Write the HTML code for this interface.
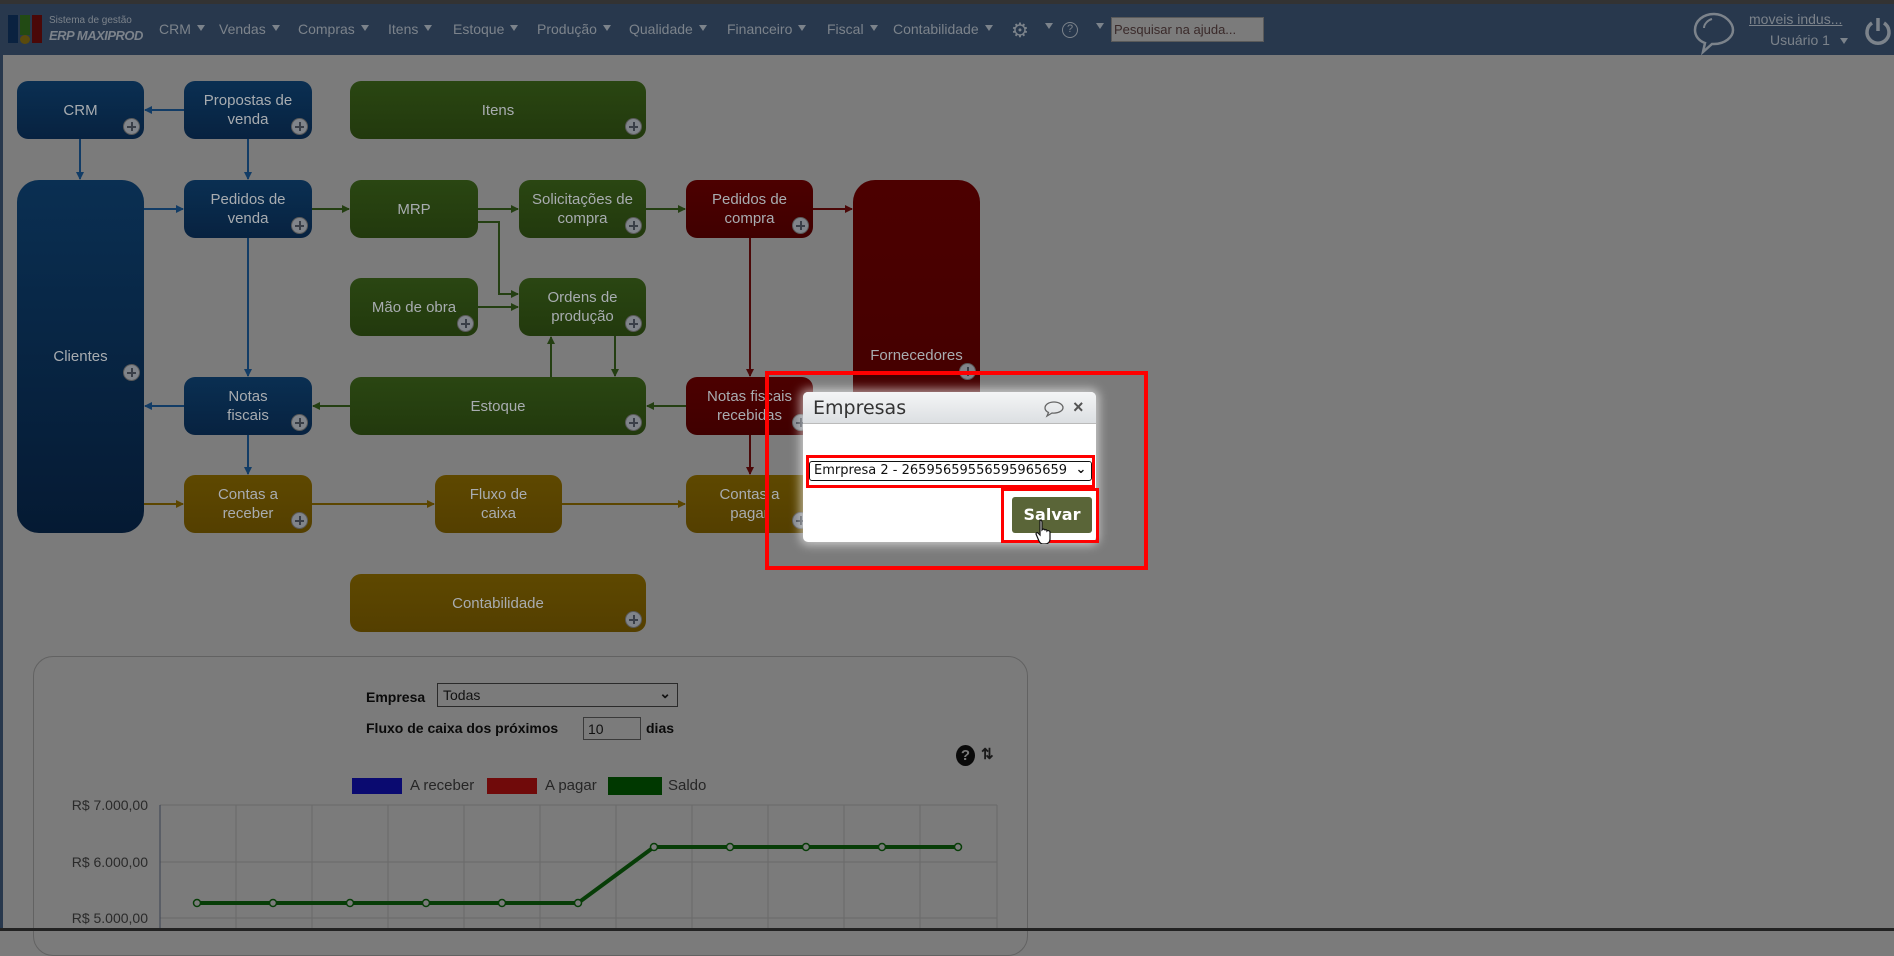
<!DOCTYPE html>
<html><head><meta charset="utf-8">
<style>
*{margin:0;padding:0;box-sizing:border-box}
body{width:1894px;height:931px;overflow:hidden;background:#7b7b7b;font-family:"Liberation Sans",sans-serif;position:relative}
.top{position:absolute;left:0;top:0;width:1894px;height:4px;background:#333}
.nav{position:absolute;left:0;top:4px;width:1894px;height:51px;background:#28384d}
.nav .m{position:absolute;top:17px;font-size:14px;color:#7c838b}
.nav .m:after{content:"";display:inline-block;margin-left:6px;border-left:4px solid transparent;border-right:4px solid transparent;border-top:6px solid #7c838b;vertical-align:3px}
.lb{position:absolute;left:0;top:55px;width:3px;height:876px;background:#28384d}
.b{position:absolute;border-radius:11px;color:#a8acb0;font-size:15px;text-align:center;display:flex;align-items:center;justify-content:center;line-height:19px}
.bl{background:linear-gradient(#0a2f52,#072240)}
.gr{background:linear-gradient(#2a4612,#22390d)}
.rd{background:linear-gradient(#4c0000,#400000)}
.yl{background:linear-gradient(#5e4800,#543f00)}
.p{position:absolute;right:4px;bottom:4px;width:17px;height:17px;border-radius:50%;background:#80848a;border:1px solid #5a5a5a}
.p:before{content:"";position:absolute;left:3px;top:7px;width:9px;height:2px;background:#3a3f48}
.p:after{content:"";position:absolute;left:7px;top:3px;width:2px;height:9px;background:#3a3f48}
.panel{position:absolute;left:33px;top:656px;width:995px;height:300px;border:1px solid #626262;border-radius:20px}
.t{position:absolute;font-size:14px;color:#0a0a0a}
</style></head><body>
<div class="top"></div>
<div class="nav">
 <div style="position:absolute;left:8px;top:11px;width:10px;height:28px;background:#0a2240"></div>
 <div style="position:absolute;left:20px;top:11px;width:10px;height:20px;background:#224a14"></div>
 <div style="position:absolute;left:20px;top:31px;width:10px;height:9px;border-radius:50%;background:#5a4a0c"></div>
 <div style="position:absolute;left:32px;top:11px;width:10px;height:28px;background:#4a0808"></div>
 <div style="position:absolute;left:49px;top:11px;font-size:10px;color:#7c838b">Sistema de gestão</div>
 <div style="position:absolute;left:49px;top:24px;font-size:13px;font-style:italic;font-weight:bold;color:#7c838b;letter-spacing:-0.5px">ERP MAXIPROD</div>
 <div class="m" style="left:159px">CRM</div>
 <div class="m" style="left:219px">Vendas</div>
 <div class="m" style="left:298px">Compras</div>
 <div class="m" style="left:388px">Itens</div>
 <div class="m" style="left:453px">Estoque</div>
 <div class="m" style="left:537px">Produção</div>
 <div class="m" style="left:629px">Qualidade</div>
 <div class="m" style="left:727px">Financeiro</div>
 <div class="m" style="left:827px">Fiscal</div>
 <div class="m" style="left:893px">Contabilidade</div>
 <div style="position:absolute;left:1011px;top:14px;font-size:20px;color:#7c838b">⚙</div>
 <div style="position:absolute;left:1045px;top:19px;border-left:4px solid transparent;border-right:4px solid transparent;border-top:6px solid #7c838b"></div>
 <div style="position:absolute;left:1062px;top:18px;width:16px;height:16px;border:1.5px solid #7c838b;border-radius:50%;font-size:11px;color:#7c838b;text-align:center;line-height:13px">?</div>
 <div style="position:absolute;left:1096px;top:19px;border-left:4px solid transparent;border-right:4px solid transparent;border-top:6px solid #7c838b"></div>
 <div style="position:absolute;left:1111px;top:13px;width:153px;height:25px;background:#7b7b7b;border:1px solid #5a5a5a;font-size:13px;color:#3a2a2a;padding:4px 2px">Pesquisar na ajuda...</div>
 <svg style="position:absolute;left:1690px;top:6px" width="48" height="46" viewBox="0 0 48 46"><path d="M24 4C13 4 5 11 5 20c0 6 4 11 10 13l-2 9 9-8c1 0 1 0 2 0 11 0 19-7 19-14S35 4 24 4z" fill="none" stroke="#7c838b" stroke-width="2.5"/><path d="M14 18c0-4 4-8 8-9" fill="none" stroke="#7c838b" stroke-width="2"/></svg>
 <div style="position:absolute;left:1749px;top:7px;font-size:14px;color:#7c838b;text-decoration:underline">moveis indus...</div>
 <div style="position:absolute;left:1770px;top:28px;font-size:14px;color:#7c838b">Usuário 1</div>
 <div style="position:absolute;left:1840px;top:34px;border-left:4px solid transparent;border-right:4px solid transparent;border-top:6px solid #7c838b"></div>
 <svg style="position:absolute;left:1864px;top:12px" width="28" height="30" viewBox="0 0 28 30"><path d="M8 7A11 11 0 1 0 20 7" fill="none" stroke="#7c838b" stroke-width="3.5"/><line x1="14" y1="2" x2="14" y2="15" stroke="#7c838b" stroke-width="3.5"/></svg>
</div>
<div class="lb"></div>

<svg style="position:absolute;left:0;top:0" width="1894" height="931">
<defs>
<marker id="ab" markerWidth="8" markerHeight="8" refX="7" refY="4" orient="auto" markerUnits="userSpaceOnUse"><path d="M0 0L8 4L0 8z" fill="#123c66"/></marker>
<marker id="ag" markerWidth="8" markerHeight="8" refX="7" refY="4" orient="auto" markerUnits="userSpaceOnUse"><path d="M0 0L8 4L0 8z" fill="#243f12"/></marker>
<marker id="ar" markerWidth="8" markerHeight="8" refX="7" refY="4" orient="auto" markerUnits="userSpaceOnUse"><path d="M0 0L8 4L0 8z" fill="#4c0808"/></marker>
<marker id="ay" markerWidth="8" markerHeight="8" refX="7" refY="4" orient="auto" markerUnits="userSpaceOnUse"><path d="M0 0L8 4L0 8z" fill="#5c4600"/></marker>
</defs>
<g stroke-width="2" fill="none">
<path d="M184 110H145" stroke="#123c66" marker-end="url(#ab)"/>
<path d="M80 139V179" stroke="#123c66" marker-end="url(#ab)"/>
<path d="M248 139V179" stroke="#123c66" marker-end="url(#ab)"/>
<path d="M144 209H183" stroke="#123c66" marker-end="url(#ab)"/>
<path d="M248 238V376" stroke="#123c66" marker-end="url(#ab)"/>
<path d="M184 406H145" stroke="#123c66" marker-end="url(#ab)"/>
<path d="M248 435V474" stroke="#123c66" marker-end="url(#ab)"/>
<path d="M312 209H349" stroke="#243f12" marker-end="url(#ag)"/>
<path d="M478 209H518" stroke="#243f12" marker-end="url(#ag)"/>
<path d="M646 209H685" stroke="#243f12" marker-end="url(#ag)"/>
<path d="M478 222H499V294H518" stroke="#243f12" marker-end="url(#ag)"/>
<path d="M478 307H518" stroke="#243f12" marker-end="url(#ag)"/>
<path d="M551 377V337" stroke="#243f12" marker-end="url(#ag)"/>
<path d="M615 336V376" stroke="#243f12" marker-end="url(#ag)"/>
<path d="M686 406H647" stroke="#243f12" marker-end="url(#ag)"/>
<path d="M350 406H313" stroke="#243f12" marker-end="url(#ag)"/>
<path d="M813 209H852" stroke="#4c0808" marker-end="url(#ar)"/>
<path d="M750 238V376" stroke="#4c0808" marker-end="url(#ar)"/>
<path d="M750 435V474" stroke="#4c0808" marker-end="url(#ar)"/>
<path d="M144 504H183" stroke="#5c4600" marker-end="url(#ay)"/>
<path d="M312 504H434" stroke="#5c4600" marker-end="url(#ay)"/>
<path d="M562 504H685" stroke="#5c4600" marker-end="url(#ay)"/>
</g>
</svg>

<div class="b bl" style="left:17px;top:81px;width:127px;height:58px">CRM<span class="p"></span></div>
<div class="b bl" style="left:184px;top:81px;width:128px;height:58px">Propostas de<br>venda<span class="p"></span></div>
<div class="b gr" style="left:350px;top:81px;width:296px;height:58px">Itens<span class="p"></span></div>
<div class="b bl" style="left:17px;top:180px;width:127px;height:353px;border-radius:22px;background:linear-gradient(#0a2f52,#051a33)">Clientes<span class="p" style="bottom:152px"></span></div>
<div class="b bl" style="left:184px;top:180px;width:128px;height:58px">Pedidos de<br>venda<span class="p"></span></div>
<div class="b gr" style="left:350px;top:180px;width:128px;height:58px">MRP</div>
<div class="b gr" style="left:519px;top:180px;width:127px;height:58px">Solicitações de<br>compra<span class="p"></span></div>
<div class="b rd" style="left:686px;top:180px;width:127px;height:58px">Pedidos de<br>compra<span class="p"></span></div>
<div class="b rd" style="left:853px;top:180px;width:127px;height:353px;border-radius:22px">&nbsp;<div style="position:absolute;left:0;width:127px;top:166px">Fornecedores</div><span class="p" style="top:183px;bottom:auto"></span></div>
<div class="b gr" style="left:350px;top:278px;width:128px;height:58px">Mão de obra<span class="p"></span></div>
<div class="b gr" style="left:519px;top:278px;width:127px;height:58px">Ordens de<br>produção<span class="p"></span></div>
<div class="b bl" style="left:184px;top:377px;width:128px;height:58px">Notas<br>fiscais<span class="p"></span></div>
<div class="b gr" style="left:350px;top:377px;width:296px;height:58px">Estoque<span class="p"></span></div>
<div class="b rd" style="left:686px;top:377px;width:127px;height:58px">Notas fiscais<br>recebidas<span class="p"></span></div>
<div class="b yl" style="left:184px;top:475px;width:128px;height:58px">Contas a<br>receber<span class="p"></span></div>
<div class="b yl" style="left:435px;top:475px;width:127px;height:58px">Fluxo de<br>caixa</div>
<div class="b yl" style="left:686px;top:475px;width:127px;height:58px">Contas a<br>pagar<span class="p"></span></div>
<div class="b yl" style="left:350px;top:574px;width:296px;height:58px">Contabilidade<span class="p"></span></div>

<div class="panel"></div>
<div class="t" style="left:366px;top:689px;font-weight:bold">Empresa</div>
<div style="position:absolute;left:437px;top:683px;width:241px;height:24px;border:1px solid #2a2a2a;background:#7b7b7b;font-size:14px;color:#111;padding:3px 5px">Todas<span style="position:absolute;right:6px;top:1px;font-weight:bold">⌄</span></div>
<div class="t" style="left:366px;top:720px;font-weight:bold">Fluxo de caixa dos próximos</div>
<div style="position:absolute;left:583px;top:717px;width:58px;height:23px;border:1px solid #3a3a3a;font-size:14px;color:#111;padding:3px 4px">10</div>
<div class="t" style="left:646px;top:720px;font-weight:bold">dias</div>
<div style="position:absolute;left:956px;top:745px;width:19px;height:21px;border-radius:50%;background:#0a0a0a;color:#7b7b7b;font-weight:bold;font-size:15px;text-align:center;line-height:21px">?</div>
<div style="position:absolute;left:981px;top:745px;font-size:15px;color:#1a1a1a;font-weight:bold">⇅</div>
<div style="position:absolute;left:352px;top:778px;width:50px;height:16px;background:#0a0a70"></div>
<div class="t" style="left:410px;top:777px;color:#262626;font-size:15px">A receber</div>
<div style="position:absolute;left:487px;top:778px;width:50px;height:16px;background:#700a0a"></div>
<div class="t" style="left:545px;top:777px;color:#262626;font-size:15px">A pagar</div>
<div style="position:absolute;left:608px;top:777px;width:54px;height:18px;background:#003800"></div>
<div class="t" style="left:668px;top:777px;color:#262626;font-size:15px">Saldo</div>
<svg style="position:absolute;left:0;top:790px" width="1030" height="141">
<g stroke="#6a6a6a" stroke-width="1">
<line x1="160" y1="15" x2="997" y2="15"/><line x1="160" y1="72" x2="997" y2="72"/><line x1="160" y1="128" x2="997" y2="128"/>
<line x1="236" y1="15" x2="236" y2="141"/><line x1="312" y1="15" x2="312" y2="141"/><line x1="388" y1="15" x2="388" y2="141"/><line x1="464" y1="15" x2="464" y2="141"/><line x1="540" y1="15" x2="540" y2="141"/><line x1="616" y1="15" x2="616" y2="141"/><line x1="692" y1="15" x2="692" y2="141"/><line x1="768" y1="15" x2="768" y2="141"/><line x1="844" y1="15" x2="844" y2="141"/><line x1="920" y1="15" x2="920" y2="141"/><line x1="997" y1="15" x2="997" y2="141"/>
</g>
<line x1="160" y1="15" x2="160" y2="141" stroke="#3a4050"/>
<g font-family="Liberation Sans" font-size="14" fill="#2a2a2a" text-anchor="end"><text x="148" y="20">R$ 7.000,00</text><text x="148" y="77">R$ 6.000,00</text><text x="148" y="133">R$ 5.000,00</text></g>
<polyline points="197,113 273,113 350,113 426,113 502,113 578,113 654,57 730,57 806,57 882,57 958,57" fill="none" stroke="#073d07" stroke-width="4"/>
<g fill="#7b7b7b" stroke="#073d07" stroke-width="1.5">
<circle cx="197" cy="113" r="3.5"/><circle cx="273" cy="113" r="3.5"/><circle cx="350" cy="113" r="3.5"/><circle cx="426" cy="113" r="3.5"/><circle cx="502" cy="113" r="3.5"/><circle cx="578" cy="113" r="3.5"/><circle cx="654" cy="57" r="3.5"/><circle cx="730" cy="57" r="3.5"/><circle cx="806" cy="57" r="3.5"/><circle cx="882" cy="57" r="3.5"/><circle cx="958" cy="57" r="3.5"/>
</g>
</svg>
<div style="position:absolute;left:0;top:928px;width:1894px;height:3px;background:#222"></div>

<!-- dialog -->
<div style="position:absolute;left:765px;top:371px;width:383px;height:199px;border:4px solid #ff0000"></div>
<div style="position:absolute;left:803px;top:392px;width:293px;height:150px;background:#fff;border-radius:5px;box-shadow:0 0 10px 3px rgba(255,255,255,0.6);overflow:hidden">
 <div style="height:32px;background:linear-gradient(#f4f5f6,#dcdfe2);border-bottom:1px solid #bbb;font-family:'DejaVu Sans',sans-serif;font-size:19px;color:#333;padding:5px 10px">Empresas</div>
 <svg style="position:absolute;left:240px;top:8px" width="22" height="18" viewBox="0 0 22 18"><path d="M11 2C6 2 2 4.5 2 8c0 2 1.5 3.5 3.5 4.5L4 16l5-3c.7.1 1.3.1 2 .1 5 0 9-2.5 9-5.5S16 2 11 2z" fill="none" stroke="#666" stroke-width="1.3"/></svg>
 <div style="position:absolute;left:270px;top:5px;font-size:18px;font-weight:bold;color:#555">×</div>
</div>
<div style="position:absolute;left:806px;top:455px;width:289px;height:33px;border:3px solid #ff0000"></div>
<div style="position:absolute;left:809px;top:461px;width:283px;height:20px;border:1.5px solid #111;border-radius:3px;background:#fff;font-family:'DejaVu Sans',sans-serif;font-size:13px;color:#111;padding:1px 4px;overflow:hidden;white-space:nowrap">Emrpresa 2 - 26595659556595965659<span style="position:absolute;right:0;top:0;width:20px;height:17px;background:#fff;font-weight:bold;text-align:center">⌄</span></div>
<div style="position:absolute;left:1001px;top:488px;width:98px;height:55px;border:3px solid #ff0000"></div>
<div style="position:absolute;left:1012px;top:497px;width:80px;height:36px;background:#5a6538;border-radius:3px;color:#fff;font-family:'DejaVu Sans',sans-serif;font-weight:bold;font-size:16px;text-align:center;line-height:36px">Salvar</div>
<svg style="position:absolute;left:1034px;top:518px" width="22" height="26" viewBox="0 0 22 26"><path d="M6 2c1 0 2 1 2 2v8l1-1c1 0 2 1 2 1 1-1 2 0 2 1 1-1 3 0 3 1v7c0 3-2 5-5 5H9c-2 0-3-1-4-3L2 16c0-1 1-2 2-1l2 2V4c0-1 0-2 0-2z" fill="#fff" stroke="#111" stroke-width="1.2"/></svg>
</body></html>
